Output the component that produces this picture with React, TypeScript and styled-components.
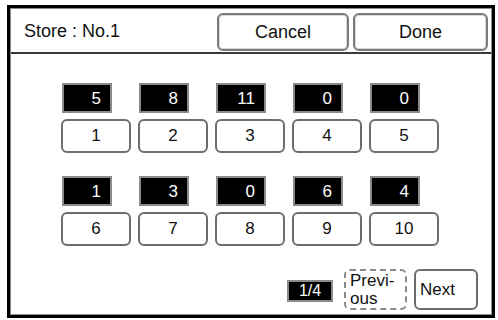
import React from "react";
import styled, { createGlobalStyle } from "styled-components";

const Global = createGlobalStyle`
  html, body { margin: 0; padding: 0; background: #fff; }
  body { font-family: "Liberation Sans", Arial, sans-serif; color: #111; }
`;

const Frame = styled.div`
  box-sizing: border-box;
  margin: 5px 0 0 7px;
  width: 488px;
  height: 313px;
  border: 3px solid #000;
  box-shadow: inset 0 0 0 1px #8a8a8a;
  padding: 1px;
  display: flex;
  flex-direction: column;
  background: #fff;
`;

const Header = styled.div`
  display: flex;
  align-items: center;
  height: 45px;
  box-sizing: border-box;
  padding: 3px 3px 0 13px;
  border-bottom: 2px solid #3a3a3a;
`;

const Title = styled.div`
  flex: 1;
  font-size: 18px;
  padding-bottom: 2px;
`;

const HeadButton = styled.div<{ $w: number }>`
  box-sizing: border-box;
  width: ${(p) => p.$w}px;
  height: 38px;
  margin-left: 4px;
  border: 2px solid #7a7a7a;
  border-radius: 6px;
  box-shadow: inset 0 0 0 1px #d8d8d8;
  display: flex;
  align-items: center;
  justify-content: center;
  font-size: 18px;
`;

const Body = styled.div`
  display: flex;
  flex-direction: column;
  gap: 23px;
  padding: 29px 0 0 50px;
`;

const Row = styled.div`
  display: flex;
  gap: 7px;
`;

const Column = styled.div`
  display: flex;
  flex-direction: column;
  gap: 6px;
  width: 70px;
`;

const ValueBox = styled.div`
  box-sizing: border-box;
  width: 50px;
  height: 30px;
  margin-left: 1px;
  background: #000;
  border: 2px solid #8a8a8a;
  color: #fff;
  font-size: 17px;
  display: flex;
  align-items: center;
  justify-content: flex-end;
  padding: 1px 9px 0 0;
`;

const SlotButton = styled.div`
  box-sizing: border-box;
  width: 70px;
  height: 34px;
  border: 2px solid #6e6e6e;
  border-radius: 6px;
  display: flex;
  align-items: center;
  justify-content: center;
  font-size: 17px;
  background: #fff;
`;

const Footer = styled.div`
  margin-top: auto;
  display: flex;
  align-items: center;
  justify-content: flex-end;
  padding: 0 13px 4px 0;
`;

const PageBox = styled.div`
  box-sizing: border-box;
  width: 46px;
  height: 22px;
  background: #000;
  border: 2px solid #8a8a8a;
  color: #fff;
  font-size: 16px;
  display: flex;
  align-items: center;
  justify-content: center;
  margin: 2px 4px 0 0;
`;

const NavButton = styled.div<{ $dashed?: boolean; $w: number }>`
  box-sizing: border-box;
  width: ${(p) => p.$w}px;
  height: 41px;
  border: 2px ${(p) => (p.$dashed ? "dashed #8a8a8a" : "solid #6e6e6e")};
  border-radius: 6px;
  display: flex;
  align-items: center;
  font-size: 17px;
  line-height: 18px;
  padding-left: 4px;
  margin-left: 7px;
`;

const top = [5, 8, 11, 0, 0];
const bottom = [1, 3, 0, 6, 4];

export default function App() {
  return (
    <>
      <Global />
      <Frame>
        <Header>
          <Title>Store : No.1</Title>
          <HeadButton $w={132}>Cancel</HeadButton>
          <HeadButton $w={135}>Done</HeadButton>
        </Header>
        <Body>
          {[top, bottom].map((vals, r) => (
            <Row key={r}>
              {vals.map((v, i) => (
                <Column key={i}>
                  <ValueBox>{v}</ValueBox>
                  <SlotButton>{r * 5 + i + 1}</SlotButton>
                </Column>
              ))}
            </Row>
          ))}
        </Body>
        <Footer>
          <PageBox>1/4</PageBox>
          <NavButton $dashed $w={63}>
            Previ-
            <br />
            ous
          </NavButton>
          <NavButton $w={64}>Next</NavButton>
        </Footer>
      </Frame>
    </>
  );
}
